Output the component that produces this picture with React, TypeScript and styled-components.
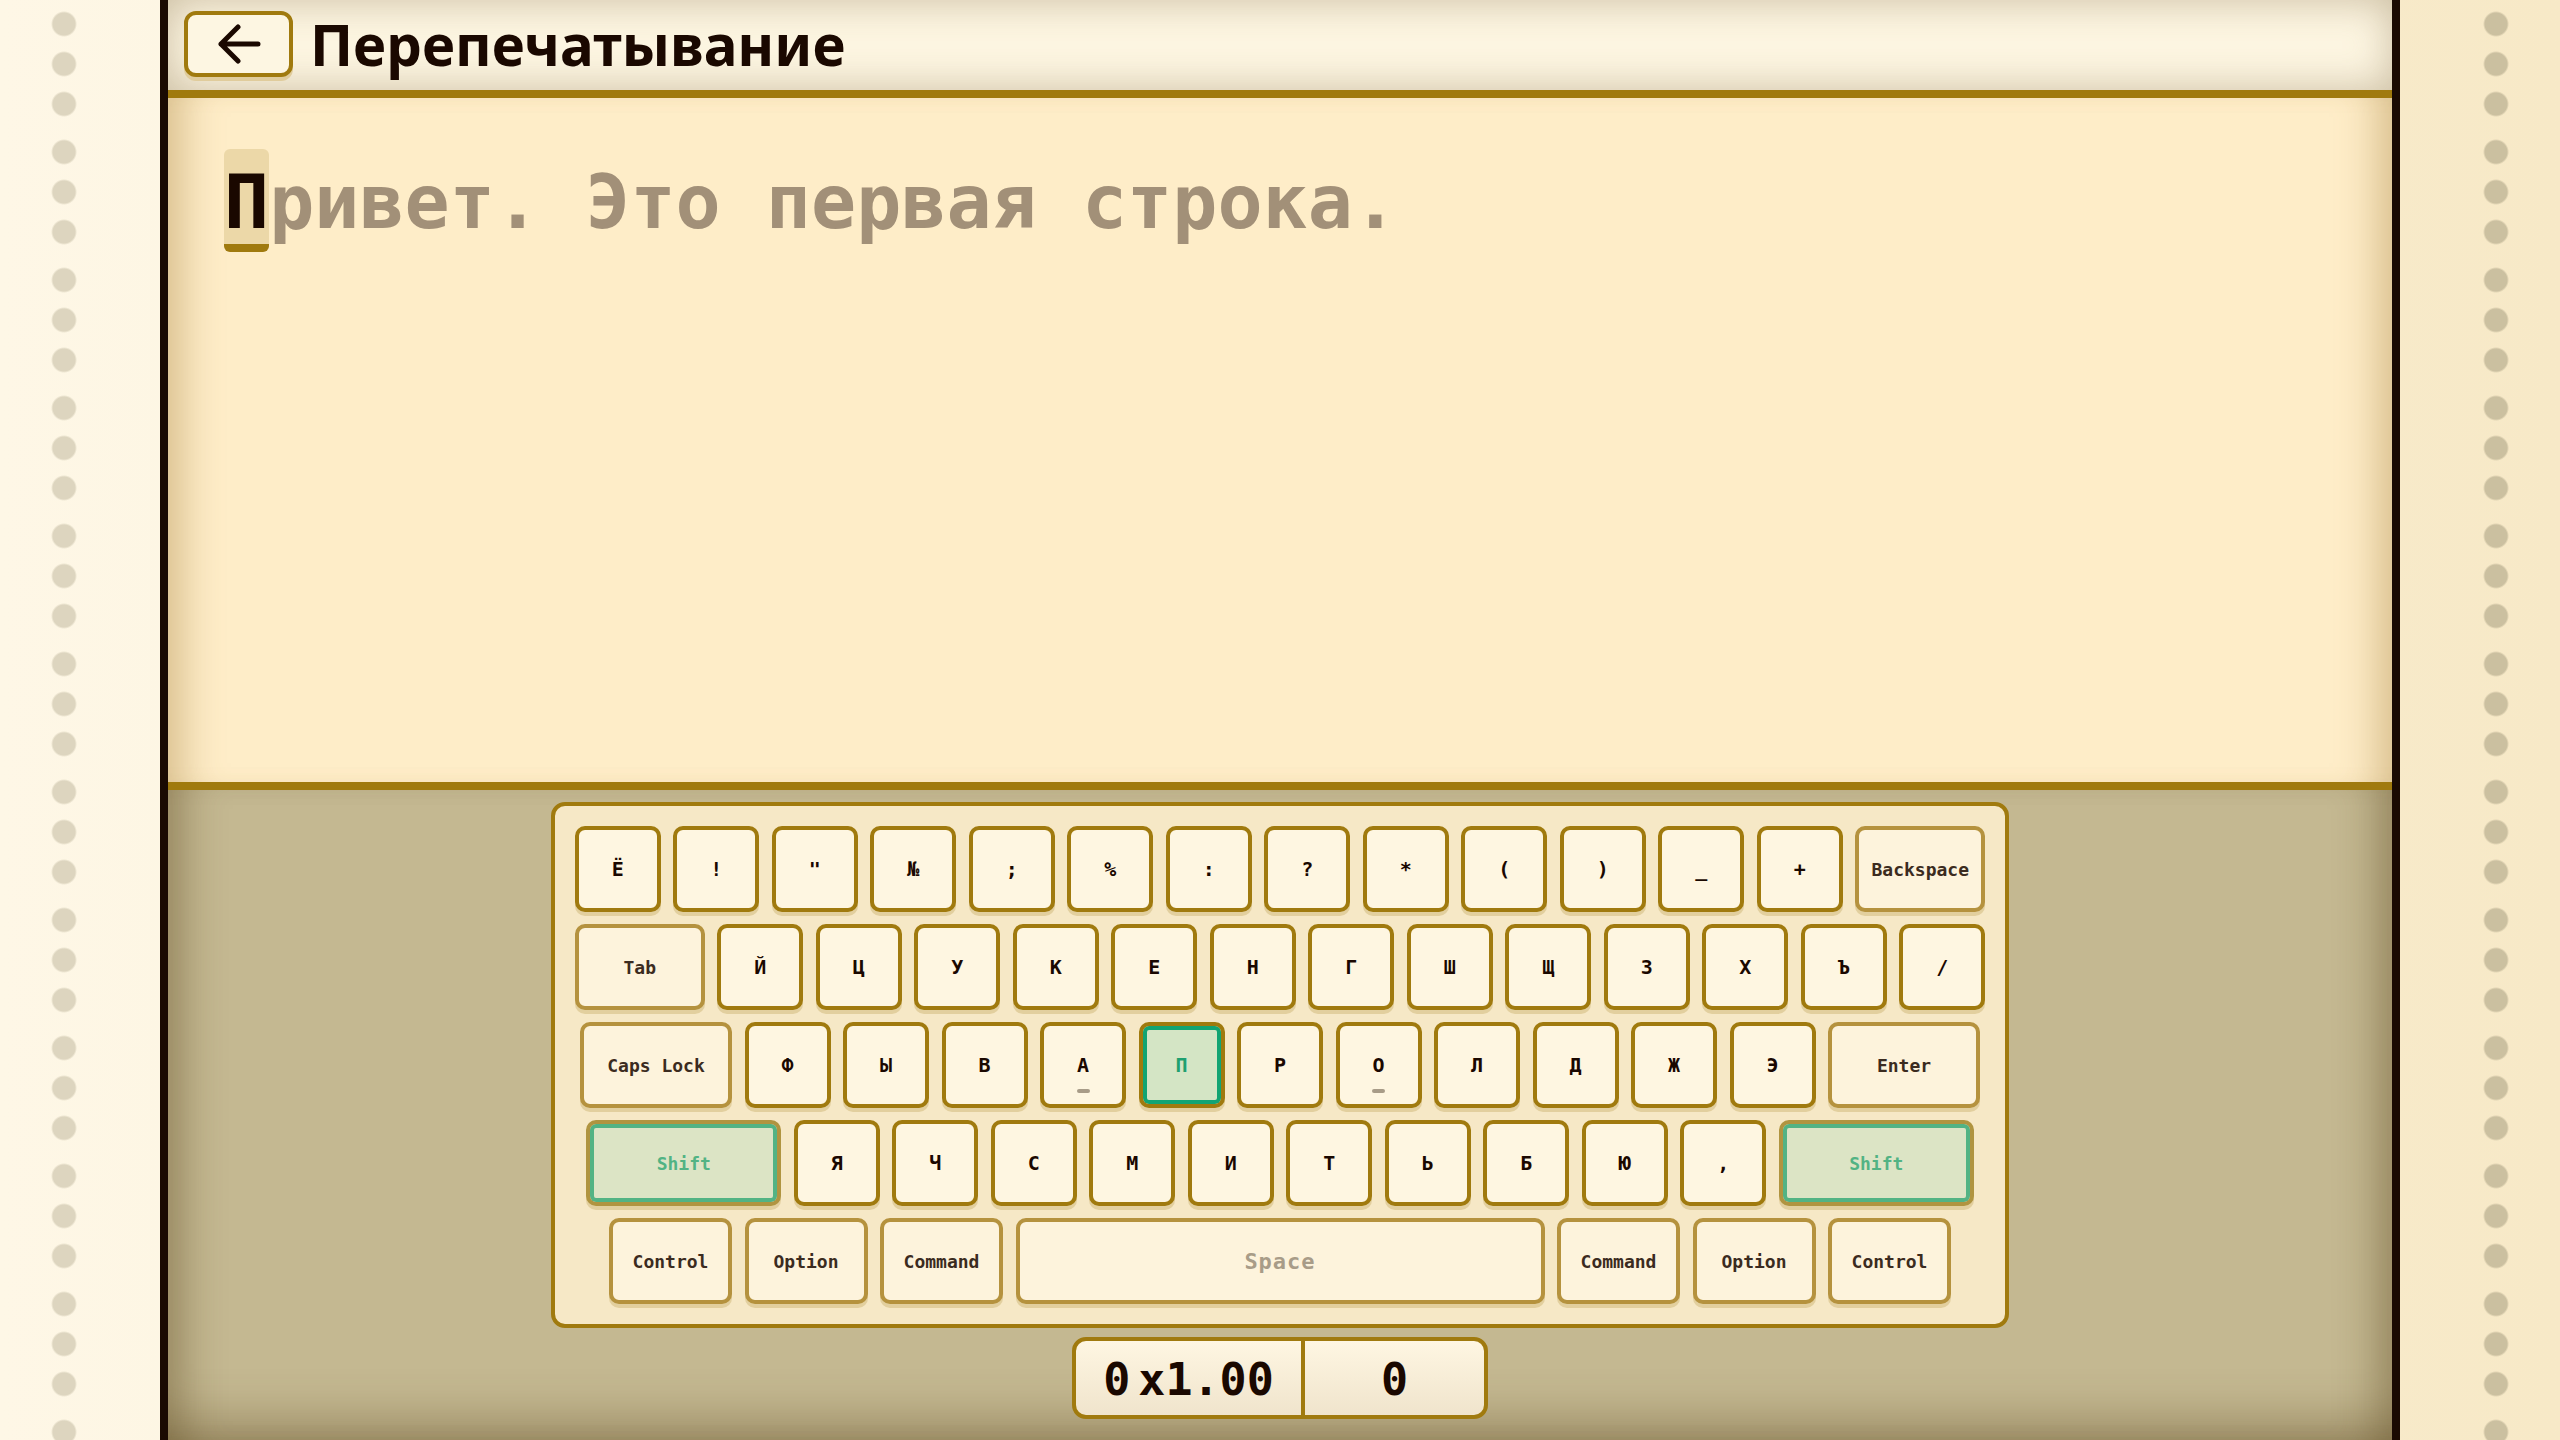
import React from 'react';
import styled, { createGlobalStyle, css } from 'styled-components';

const GOLD = '#a07a0e';
const MOD_GOLD = '#b5923e';
const INK = '#1a0800';

const GlobalStyle = createGlobalStyle`
  html, body { margin: 0; padding: 0; height: 100%; }
  body {
    background: linear-gradient(90deg, #fef7e6 0%, #faefd6 50%, #f7e9c7 100%);
    font-family: "Noto Sans", "DejaVu Sans", sans-serif;
    overflow: hidden;
  }
  #root { height: 100%; }
`;

const Page = styled.div`
  display: flex;
  height: 100vh;
`;

const Gutter = styled.div<{ $dot: string; $x: number }>`
  flex: 0 0 160px;
  background-image:
    radial-gradient(circle at ${(p) => p.$x}px 24px, ${(p) => p.$dot} 0 11px, transparent 13px),
    radial-gradient(circle at ${(p) => p.$x}px 64px, ${(p) => p.$dot} 0 11px, transparent 13px),
    radial-gradient(circle at ${(p) => p.$x}px 104px, ${(p) => p.$dot} 0 11px, transparent 13px);
  background-size: 160px 128px;
  background-repeat: repeat-y;
`;

const Main = styled.main`
  flex: 1;
  min-width: 0;
  display: flex;
  flex-direction: column;
  border-left: 8px solid #1a0a02;
  border-right: 8px solid #1a0a02;
`;

const Header = styled.header`
  flex: none;
  height: 90px;
  display: flex;
  align-items: center;
  gap: 17px;
  padding: 0 16px;
  background: #fdf6e2;
  border-bottom: 8px solid ${GOLD};
  box-shadow: inset 0 0 42px rgba(120, 95, 55, 0.38);
`;

const BackButton = styled.button`
  box-sizing: border-box;
  width: 109px;
  height: 66px;
  margin-bottom: 3px;
  display: grid;
  place-items: center;
  padding: 0;
  background: #fdf6e2;
  border: 4px solid ${GOLD};
  border-radius: 12px;
  box-shadow: 0 4px 0 #e0cc9c;
  cursor: pointer;
`;

const Title = styled.h1`
  margin: 0;
  font-family: "Noto Sans", sans-serif;
  font-weight: 700;
  font-size: 56.5px;
  line-height: 1;
  color: ${INK};
`;

const TextArea = styled.div`
  flex: 1;
  padding: 48px 56px;
  background: #feedc8;
  box-shadow:
    inset 44px 0 40px -30px rgba(160, 120, 50, 0.4),
    inset -44px 0 40px -30px rgba(160, 120, 50, 0.4);
`;

const Line = styled.div`
  font-family: "DejaVu Sans Mono", monospace;
  font-weight: 700;
  font-size: 75px;
  line-height: 112px;
  color: #a29078;
  white-space: pre;
`;

const Cursor = styled.span`
  display: inline-block;
  color: ${INK};
  background: #ecd8a8;
  border-radius: 6px;
  padding-top: 11px;
  line-height: 84px;
  border-bottom: 8px solid ${GOLD};
`;

const KeyboardPanel = styled.section`
  flex: none;
  display: flex;
  flex-direction: column;
  align-items: center;
  gap: 9px;
  padding: 12px 0 21px;
  background: #c4b891;
  border-top: 8px solid ${GOLD};
  box-shadow:
    inset 46px 0 40px -30px rgba(90, 70, 30, 0.4),
    inset -46px 0 40px -30px rgba(90, 70, 30, 0.4),
    inset 0 -50px 50px -34px rgba(90, 70, 30, 0.45);
`;

const Keyboard = styled.div`
  display: flex;
  flex-direction: column;
  align-items: center;
  gap: 12px;
  padding: 20px;
  background: #f6e8c6;
  border: 4px solid ${GOLD};
  border-radius: 14px;
`;

const Row = styled.div`
  display: flex;
  gap: 12.5px;
`;

type Variant = 'char' | 'mod' | 'target' | 'shift' | 'space';

const variantStyles: Record<Variant, ReturnType<typeof css>> = {
  char: css`
    background: #fef6e1;
    border-color: ${GOLD};
    color: ${INK};
    font-size: 20px;
  `,
  mod: css`
    background: #fdf3dc;
    border-color: ${MOD_GOLD};
    color: #3b2b20;
    font-size: 18px;
  `,
  space: css`
    background: #fdf3dc;
    border-color: ${MOD_GOLD};
    color: #a89c88;
    font-size: 22px;
    letter-spacing: 1px;
  `,
  target: css`
    background: #d4e5c5;
    border-color: ${GOLD};
    color: #1fa070;
    font-size: 20px;
    box-shadow: inset 0 0 0 4px #12a473, 0 4px 0 #e2cf9e;
  `,
  shift: css`
    background: #dce4c5;
    border-color: #b09440;
    color: #52b384;
    font-size: 18px;
    box-shadow: inset 0 0 0 4px #52b384, 0 4px 0 #e2cf9e;
  `,
};

const Key = styled.div<{ $w: number; $variant: Variant }>`
  position: relative;
  box-sizing: border-box;
  flex: none;
  width: ${(p) => p.$w}px;
  height: 86px;
  display: flex;
  align-items: center;
  justify-content: center;
  border: 4px solid;
  border-radius: 10px;
  box-shadow: 0 4px 0 #e2cf9e;
  font-family: "DejaVu Sans Mono", monospace;
  font-weight: 700;
  ${(p) => variantStyles[p.$variant]}
`;

const HomeBump = styled.span`
  position: absolute;
  left: 50%;
  bottom: 11px;
  width: 13px;
  height: 4px;
  margin-left: -6.5px;
  border-radius: 2px;
  background: #a89c88;
`;

const Counter = styled.div`
  box-sizing: border-box;
  height: 82px;
  display: flex;
  border: 4px solid ${GOLD};
  border-radius: 14px;
  overflow: hidden;
  background: linear-gradient(180deg, #fef6e2 0%, #f0e4cc 100%);
`;

const CounterCell = styled.div<{ $min: number }>`
  min-width: ${(p) => p.$min}px;
  display: flex;
  align-items: center;
  justify-content: center;
  gap: 8px;
  padding-top: 3px;
  font-family: "DejaVu Sans Mono", monospace;
  font-weight: 700;
  font-size: 45px;
  color: ${INK};
  & + & {
    border-left: 4px solid ${GOLD};
  }
`;

type KeyDef = { label: string; w?: number; v?: Variant; bump?: boolean };

const U = 86;

const rows: KeyDef[][] = [
  [
    ...['Ё', '!', '"', '№', ';', '%', ':', '?', '*', '(', ')', '_', '+'].map((l) => ({ label: l })),
    { label: 'Backspace', w: 130, v: 'mod' as Variant },
  ],
  [
    { label: 'Tab', w: 130, v: 'mod' as Variant },
    ...['Й', 'Ц', 'У', 'К', 'Е', 'Н', 'Г', 'Ш', 'Щ', 'З', 'Х', 'Ъ', '/'].map((l) => ({ label: l })),
  ],
  [
    { label: 'Caps Lock', w: 152, v: 'mod' as Variant },
    { label: 'Ф' },
    { label: 'Ы' },
    { label: 'В' },
    { label: 'А', bump: true },
    { label: 'П', v: 'target' as Variant },
    { label: 'Р' },
    { label: 'О', bump: true },
    { label: 'Л' },
    { label: 'Д' },
    { label: 'Ж' },
    { label: 'Э' },
    { label: 'Enter', w: 152, v: 'mod' as Variant },
  ],
  [
    { label: 'Shift', w: 195, v: 'shift' as Variant },
    ...['Я', 'Ч', 'С', 'М', 'И', 'Т', 'Ь', 'Б', 'Ю', ','].map((l) => ({ label: l })),
    { label: 'Shift', w: 195, v: 'shift' as Variant },
  ],
  [
    { label: 'Control', w: 123, v: 'mod' as Variant },
    { label: 'Option', w: 123, v: 'mod' as Variant },
    { label: 'Command', w: 123, v: 'mod' as Variant },
    { label: 'Space', w: 529, v: 'space' as Variant },
    { label: 'Command', w: 123, v: 'mod' as Variant },
    { label: 'Option', w: 123, v: 'mod' as Variant },
    { label: 'Control', w: 123, v: 'mod' as Variant },
  ],
];

const BackArrow = () => (
  <svg width="46" height="40" viewBox="0 0 46 40" fill="none" aria-hidden="true">
    <path
      d="M42 20 H5 M22 3 L5 20 L22 37"
      stroke={INK}
      strokeWidth="5"
      strokeLinecap="round"
      strokeLinejoin="round"
    />
  </svg>
);

export default function App() {
  const text = 'Привет. Это первая строка.';
  return (
    <>
      <GlobalStyle />
      <Page>
        <Gutter $dot="#ddd5bf" $x={64} />
        <Main>
          <Header>
            <BackButton aria-label="Назад">
              <BackArrow />
            </BackButton>
            <Title>Перепечатывание</Title>
          </Header>
          <TextArea>
            <Line>
              <Cursor>{text[0]}</Cursor>
              {text.slice(1)}
            </Line>
          </TextArea>
          <KeyboardPanel>
            <Keyboard>
              {rows.map((row, ri) => (
                <Row key={ri}>
                  {row.map((k, ki) => (
                    <Key key={ki} $w={k.w ?? U} $variant={k.v ?? 'char'}>
                      {k.label}
                      {k.bump && <HomeBump />}
                    </Key>
                  ))}
                </Row>
              ))}
            </Keyboard>
            <Counter>
              <CounterCell $min={225}>
                <span>0</span>
                <span>x1.00</span>
              </CounterCell>
              <CounterCell $min={179}>
                <span>0</span>
              </CounterCell>
            </Counter>
          </KeyboardPanel>
        </Main>
        <Gutter $dot="#cbc0a0" $x={96} />
      </Page>
    </>
  );
}
